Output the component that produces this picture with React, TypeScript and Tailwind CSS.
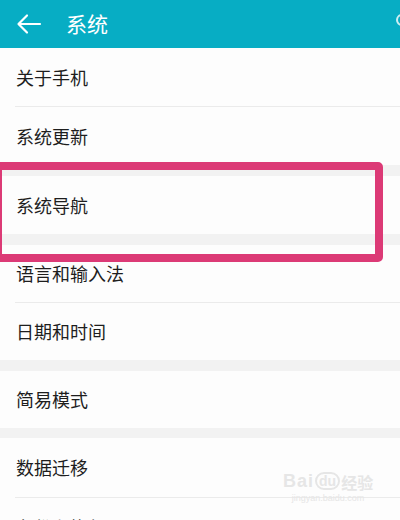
import React from "react";

const font = { fontFamily: '"Noto Sans CJK SC", "Noto Sans", sans-serif' };

function Row({ label, h, divider }: { label: string; h: string; divider?: boolean }) {
  return (
    <div className="bg-[#fdfdfd]">
      <div className={`${h} flex items-center pl-4 text-[18px] text-[#1e1e1e]`}>{label}</div>
      {divider && <div className="ml-[15px] h-px bg-[#ebebeb]" />}
    </div>
  );
}

export default function App() {
  return (
    <div className="relative w-[400px] h-[520px] overflow-hidden bg-[#f2f2f2]" style={font}>
      <div className="h-12 bg-[#07adc4] flex items-center relative">
        <svg width="26" height="22" viewBox="0 0 26 22" className="ml-[16px]">
          <path d="M24 11H3M11 2.5L2.5 11L11 19.5" stroke="white" strokeWidth="2.2" fill="none" strokeLinecap="round" strokeLinejoin="round" />
        </svg>
        <span className="ml-[24px] text-[21px] text-white">系统</span>
        <div className="absolute right-[-8px] top-[14px] w-[12px] h-[12px] rounded-full border-2 border-white/80" />
      </div>

      <Row label="关于手机" h="h-[58px]" divider />
      <Row label="系统更新" h="h-[58px]" />
      <div className="h-[11px]" />
      <Row label="系统导航" h="h-[58px]" />
      <div className="h-[11px]" />
      <Row label="语言和输入法" h="h-[57px]" divider />
      <Row label="日期和时间" h="h-[57px]" />
      <div className="h-[11px]" />
      <Row label="简易模式" h="h-[57px]" />
      <div className="h-[10px]" />
      <Row label="数据迁移" h="h-[59px]" divider />
      <Row label="备份和恢复" h="h-[58px]" />

      <div className="absolute left-[-6px] top-[162px] w-[389px] h-[100px] border-[8px] border-[#dc3a76] rounded-[5px]" />

      <div className="absolute left-[283px] top-[472px] flex flex-col items-center text-[#e6e6e6] leading-none">
        <div className="flex items-end gap-[1px]">
          <span className="text-[18px] font-bold tracking-[1px]" style={{ fontFamily: '"Liberation Sans", sans-serif' }}>Bai</span>
          <span className="text-[14px] font-bold border-2 border-[#e6e6e6] rounded-full px-[2px]" style={{ fontFamily: '"Liberation Sans", sans-serif' }}>du</span>
          <span className="text-[16px] font-bold">经验</span>
        </div>
        <span className="text-[9px] mt-[4px]" style={{ fontFamily: '"Liberation Sans", sans-serif' }}>jingyan.baidu.com</span>
      </div>
    </div>
  );
}
